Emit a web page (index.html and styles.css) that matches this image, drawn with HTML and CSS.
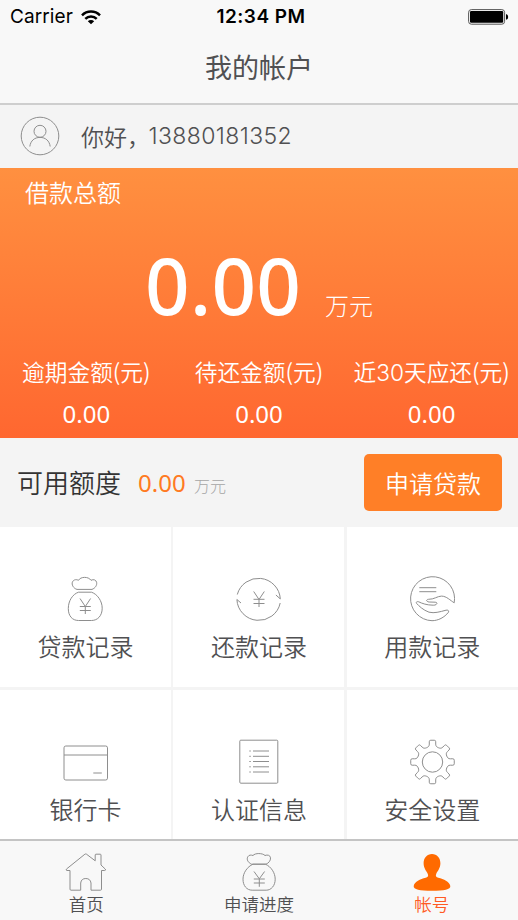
FILE: index.html
```html
<!DOCTYPE html>
<html lang="zh-CN">
<head>
<meta charset="utf-8">
<title>我的帐户</title>
<link rel="stylesheet" href="styles.css">
</head>
<body>
<div class="app">
  <header class="top">
    <div class="status">
      <div class="carrier">Carrier
        <svg class="wifi" width="20" height="15" viewBox="0 0 20 15"><g fill="none" stroke="#000" stroke-width="2.5"><path d="M1 5.3a12.7 12.7 0 0 1 18 0"/><path d="M4.3 8.9a8 8 0 0 1 11.4 0"/></g><path d="M10 14.2 6.8 11.2a4.6 4.6 0 0 1 6.4 0z"/></svg>
      </div>
      <div class="clock">12:34 PM</div>
      <svg class="battery" width="41" height="16" viewBox="0 0 41 16"><rect x=".6" y=".6" width="36" height="14.6" rx="2.8" fill="none" stroke="#555"/><rect x="2" y="2" width="33.2" height="11.8" rx="1.2"/><path d="M38 5q2.2.6 2.2 2.9T38 10.8z"/></svg>
    </div>
    <h1 class="title">我的帐户</h1>
  </header>

  <section class="hello">
    <svg class="avatar" width="40" height="40" viewBox="0 0 40 40"><circle cx="20" cy="20" r="18.8"/><circle cx="20" cy="15.3" r="6"/><path d="M9.8 30.5c.8-5.8 4.7-9.1 10.2-9.1s9.4 3.3 10.2 9.1"/></svg>
    <span class="greet">你好，</span><span class="phone">13880181352</span>
  </section>

  <section class="loan">
    <h2 class="loan-title">借款总额</h2>
    <div class="total"><span class="amount">0.00</span><span class="unit">万元</span></div>
    <div class="stats">
      <div class="stat"><span>逾期金额(元)</span><b>0.00</b></div>
      <div class="stat"><span>待还金额(元)</span><b>0.00</b></div>
      <div class="stat"><span>近<i>30</i>天应还(元)</span><b>0.00</b></div>
    </div>
  </section>

  <section class="quota">
    <span class="quota-label">可用额度</span>
    <span class="quota-num">0.00</span>
    <span class="quota-unit">万元</span>
    <button class="apply">申请贷款</button>
  </section>

  <main class="grid">
    <div class="cell">
      <svg class="icon" width="46" height="46" viewBox="0 0 46 46"><path d="M14 13.400C10.500 12.500 8.200 8.500 9.500 5.800 11 3.300 13.500 3.300 15.500 4.300 17.500.5 25.500.3 28 4.300 30.500 3 33 3.800 33.600 6.300 34.200 9 32.500 12 29 13.400z"/><path d="M15.500 16.200h13c6 2 10.700 9 10.700 16 0 7.500-4.500 12.300-10.700 12.300h-13C9.300 44.500 5.300 40 5.300 32.500c0-7.500 4.200-14.300 10.200-16.300z"/><path d="M17 22.500l5.300 8 5.300-8M16.800 30.500h11M16.800 34.500h11M22.300 30.500v7.500"/></svg>
      <span>贷款记录</span>
    </div>
    <div class="cell">
      <svg class="icon" width="46" height="46" viewBox="0 0 46 46"><path d="M1.300 18.500A21.900 21.900 0 0 1 44.300 22.900L39.900 19"/><path d="M5 27L.9 23.500A21.900 21.900 0 0 0 44.200 27"/><path d="M17.700 15.500l5.300 8 5.300-8M17.500 23.300h11M17.500 27.500h11M23 23.500V31"/></svg>
      <span>还款记录</span>
    </div>
    <div class="cell">
      <svg class="icon" width="46" height="46" viewBox="0 0 46 46"><path d="M45.200 26.800A22 22 0 1 0 23 44.700c6 0 12.500-3.200 16.500-8.500.5-1.500-.5-2.500-2.500-2-6.500 1.700-11.500 3.300-17 2C14 34 10 30 7.700 27.500c-1.200-1.500.5-2.300 2-1.700 3.500 1.700 8 3.300 14.500 3.400 4 .2 5-3 2-3l-6-.2c-3-.2-3.500-2.500-.7-2.700 5.500.2 9-3.200 13-3.200 5 0 9 4.500 12.700 6.700z"/><path d="M10.300 11.700h17M10.300 15.700h17"/></svg>
      <span>用款记录</span>
    </div>
    <div class="cell">
      <svg class="icon" width="46" height="46" viewBox="0 0 46 46"><rect x="1" y="7" width="43.500" height="34" rx="1.800"/><path d="M1 16H44.500M30.300 34h8.500"/></svg>
      <span>银行卡</span>
    </div>
    <div class="cell">
      <svg class="icon" width="46" height="46" viewBox="0 0 46 46"><rect x="3.800" y="1.200" width="38" height="43" rx="1"/><path d="M13.300 12h1.500M17 12h16M13.300 17.300h1.500M17 17.300h16M13.300 22.500h1.500M17 22.500h16M13.300 27.800h1.500M17 27.800h16M13.300 33h1.500M17 33h16"/></svg>
      <span>认证信息</span>
    </div>
    <div class="cell">
      <svg class="icon" width="46" height="46" viewBox="0 0 46 46"><circle cx="23.500" cy="23" r="10.200"/><path id="gear" d=""/></svg>
      <span>安全设置</span>
    </div>
  </main>

  <nav class="tabs">
    <div class="tab">
      <svg class="icon" width="42" height="40" viewBox="0 0 42 40"><path d="M5 17.500v18.700q0 1 1 1h9.700V30q.6-4.500 5.100-4.500t5.200 4.500v7.200h9.500q1 0 1-1V17.500h3.200q1.700-.4.500-1.500L36 12V2q0-.8-.8-.8H31q-.8 0-.8.800v5.800L21.500 1.200q-.8-.5-1.600 0L1.500 16q-1 1.100.3 1.500z"/></svg>
      <span>首页</span>
    </div>
    <div class="tab">
      <svg class="icon" width="42" height="40" viewBox="0 0 42 40"><path d="M13.500 11.200C10 9.500 8.300 6.500 9.800 3.800c1.200-2 3.200-2 5.200-1.300C17-.1 24.500-.1 27 2.500c2.500-1 5.200-.3 5.500 2.300.3 3-2 5.300-4.500 6.400z"/><path d="M15 11.200h12.500c5.500 2.500 9.700 8.600 9.700 15 0 6.500-4 11-9 11h-14c-5.500 0-9.200-4.500-9.200-11 0-6.400 4.300-12.500 10-15z"/><path d="M16 18.500l5.300 7.300 5.300-7.300M15.800 26h11M15.800 30h11M21.300 26v7.800"/></svg>
      <span>申请进度</span>
    </div>
    <div class="tab active">
      <svg width="42" height="40" viewBox="0 0 42 40"><path d="M21 1c5 0 8.400 4 8.400 9.300 0 5-3 8-4.200 10.600-.9 2.300.1 3.300 2.100 3.900 5.500 1.500 11 3.500 12 8.200.4 3.700-6 4.700-18.300 4.700S2.300 36.700 2.700 33c1-4.700 6.500-6.700 12-8.200 2-.6 3-1.600 2.100-3.900-1.200-2.600-4.200-5.600-4.200-10.600C12.600 5 16 1 21 1z" fill="#ff6a00"/></svg>
      <span>帐号</span>
    </div>
  </nav>
</div>
<script src="gear.js"></script>
</body>
</html>
```
FILE: styles.css
```css
* { box-sizing: border-box; }
body {
  margin: 0;
  font-family: "Noto Sans CJK SC", sans-serif;
  font-weight: 350;
  color: #505052;
}
.app {
  width: 518px;
  height: 920px;
  display: flex;
  flex-direction: column;
  overflow: hidden;
  background: #f4f4f4;
}
.top {
  height: 105px;
  background: #f8f8f8;
  border-bottom: 2px solid #cecece;
}
.status {
  height: 34px;
  padding: 0 9px 0 10px;
  display: grid;
  grid-template-columns: 1fr auto 1fr;
  align-items: center;
  font-family: Inter, sans-serif;
  font-size: 19px;
  line-height: 34px;
  color: #000;
}
.carrier { display: flex; gap: 8px; align-items: center; font-weight: 400; letter-spacing: .1px; }
.clock { font-weight: 600; letter-spacing: .5px; padding-left: 3px; }
.battery { justify-self: end; }
.title {
  margin: 0;
  font-size: 27px;
  line-height: 66px;
  font-weight: 400;
  text-align: center;
}
.hello {
  height: 63px;
  padding-left: 20px;
  display: flex;
  align-items: center;
  white-space: nowrap;
}
.avatar, .icon { fill: none; stroke: #8e8e8e; stroke-width: 1; stroke-linejoin: round; }
.avatar, .greet, .phone { margin-top: -1px; }
.greet { margin-left: 21px; font-size: 23px; width: 67.500px; }
.phone, .stat i { font-family: Inter, sans-serif; font-weight: 350; }
.amount, .stat b, .quota-num { font-family: "Noto Sans", sans-serif; }
.phone { font-size: 23px; letter-spacing: .4px; }
.loan {
  height: 270px;
  background: linear-gradient(#ff9040, #ff6730);
  color: #fff;
}
.loan-title {
  margin: 0;
  padding: 6px 0 0 25px;
  font-size: 24px;
  line-height: 36px;
  font-weight: 350;
}
.total {
  height: 144px;
  display: flex;
  align-items: baseline;
  padding: 27px 0 0 145px;
}
.amount { font-weight: 500; font-size: 78px; line-height: 96px; width: 180px; letter-spacing: .3px; }
.unit { font-size: 24px; font-weight: 300; }
.stats { display: grid; grid-template-columns: repeat(3, 1fr); }
.stat { display: flex; flex-direction: column; align-items: center; white-space: nowrap; font-size: 22.700px; line-height: 36px; }
.stat i { font-style: normal; line-height: 1; }
.stat b { font-weight: 400; font-size: 24px; line-height: 47px; }
.quota {
  height: 89px;
  padding: 0 16px 0 17px;
  display: flex;
  align-items: center;
}
.quota-label { width: 121px; font-size: 26px; color: #333; margin-top: -2px; }
.quota-num { width: 56px; font-size: 24px; font-weight: 400; color: #ff7a22; }
.quota-unit { font-size: 16px; font-weight: 300; color: #a5a5a5; padding-top: 4px; }
.apply {
  margin-left: auto;
  width: 138px;
  height: 57px;
  padding: 0;
  border: 0;
  border-radius: 5px;
  background: #ff7f27;
  color: #fff;
  font: 350 24px "Noto Sans CJK SC", sans-serif;
}
.grid {
  height: 312px;
  display: grid;
  grid-template-columns: 171px 171px 171px;
  grid-template-rows: 160px 149px;
  column-gap: 2.400px;
  row-gap: 3px;
}
.cell {
  display: flex;
  flex-direction: column;
  align-items: center;
  padding-top: 49px;
  background: #fff;
  font-size: 24px;
  line-height: 48px;
}
.cell svg, .tab svg { flex: none; display: block; }
.tabs {
  height: 81px;
  border-top: 2px solid #c4c4c4;
  background: #f8f8f8;
  display: grid;
  grid-template-columns: repeat(3, 1fr);
}
.tab {
  display: flex;
  flex-direction: column;
  align-items: center;
  padding-top: 12px;
  font-size: 17.500px;
  line-height: 22px;
}
.active { color: #ff5a24; }
```
FILE: gear.js
```javascript
// Outline of the eight-toothed gear, centred at (23.5, 23), with rounded corners.
const steps = [[-17.500, 15.5], [-11, 16.700], [-8.500, 22], [8.500, 22], [11, 16.700], [17.500, 15.5]];
const points = [];
for (let tooth = 0; tooth < 8; tooth++) {
  for (const [offset, radius] of steps) {
    const angle = (tooth * 45 + offset) * Math.PI / 180;
    points.push([23.5 + radius * Math.cos(angle), 23 + radius * Math.sin(angle)]);
  }
}
const toward = (a, b, distance) => {
  const t = Math.min(0.5, distance / Math.hypot(b[0] - a[0], b[1] - a[1]));
  return `${(a[0] + (b[0] - a[0]) * t).toFixed(2)} ${(a[1] + (b[1] - a[1]) * t).toFixed(2)}`;
};
const d = points.map((p, i) => {
  const before = points[(i + points.length - 1) % points.length];
  const after = points[(i + 1) % points.length];
  return `${i ? 'L' : 'M'}${toward(p, before, 1.5)}Q${p[0].toFixed(2)} ${p[1].toFixed(2)} ${toward(p, after, 1.5)}`;
});
document.getElementById('gear').setAttribute('d', d.join('') + 'Z');
```
